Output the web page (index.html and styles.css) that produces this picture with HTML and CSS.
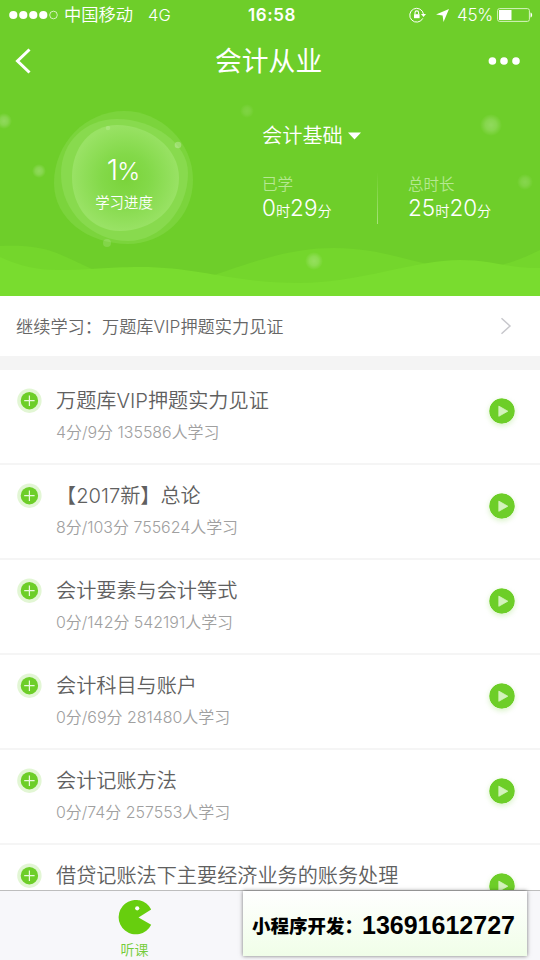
FILE: index.html
```html
<!DOCTYPE html>
<html lang="zh-CN">
<head>
<meta charset="utf-8">
<meta name="viewport" content="width=device-width, initial-scale=1">
<title>会计从业</title>
<link rel="stylesheet" href="styles.css">
</head>
<body>
<svg class="defs" aria-hidden="true">
  <defs>
    <symbol id="plus" viewBox="0 0 26 26">
      <circle cx="13.4" cy="12.7" r="12.2" fill="#e2f6d4"/>
      <circle cx="13.4" cy="12.7" r="8.7" fill="#6dce28"/>
      <path d="M13.4 7.5v10.4M8.2 12.7h10.4" stroke="#e9fadc" stroke-width="1.2" fill="none"/>
    </symbol>
    <symbol id="play" viewBox="0 0 26 26">
      <circle cx="13" cy="13" r="12.8" fill="#6dce28"/>
      <path d="M9.8 8.1v10.2l9-5.1z" fill="#d3f3bc" stroke="#d3f3bc" stroke-width=".8" stroke-linejoin="round"/>
    </symbol>
  </defs>
</svg>
<div class="screen">
  <header class="hero">
    <svg class="scene" viewBox="0 0 540 296" aria-hidden="true">
      <defs>
        <radialGradient id="orb"><stop offset="0" stop-color="#7ad33a"/><stop offset=".45" stop-color="#83d949"/><stop offset="1" stop-color="#99e265"/></radialGradient>
        <radialGradient id="dot"><stop offset="0" stop-color="#fff" stop-opacity=".24"/><stop offset=".5" stop-color="#fff" stop-opacity=".17"/><stop offset="1" stop-color="#fff" stop-opacity="0"/></radialGradient>
      </defs>
      <path d="M0 246C28 245 44 247 66 257C99 272 122 286 160 286C207 286 262 248 334 248C391 248 421 269 468 269C502 269 523 258 540 250V296H0Z" fill="#74d62c"/>
      <path d="M0 257C22 267 38 270 60 270C91 270 105 267 140 267C201 267 231 283 299 283C357 283 417 260 460 260C494 260 510 269 540 268V296H0Z" fill="#79dc2f"/>
      <path d="M124 111C160 111 193 141 193 180C193 218 162 244 128 244C88 244 54 219 54 183C54 143 86 111 124 111Z" fill="#7bd43c"/>
      <path d="M117 119C153 119 188 143 188 173C188 210 160 241 128 241C93 241 61 213 61 174C61 141 86 119 117 119Z" fill="#88da4e"/>
      <path d="M117 125C148 125 179 147 179 178C179 209 151 231 120 231C91 231 72 207 72 177C72 147 91 125 117 125Z" fill="url(#orb)"/>
      <g fill="url(#dot)">
        <circle cx="4" cy="121" r="8"/><circle cx="39" cy="171" r="7"/><circle cx="247" cy="111" r="7" opacity=".5"/>
        <circle cx="491" cy="125" r="11"/><circle cx="525" cy="182" r="8" opacity=".7"/><circle cx="314" cy="261" r="9"/>
      </g>
      <g fill="#fff"><circle cx="178" cy="145" r="3.3" opacity=".25"/><circle cx="108" cy="128" r="2.3" opacity=".15"/><circle cx="107" cy="243" r="4" opacity=".14"/></g>
    </svg>
    <div class="status">
      <svg class="signal" width="50" height="10" viewBox="0 0 50 10" fill="#fff"><circle cx="4.3" cy="5" r="4.1"/><circle cx="14.3" cy="5" r="4.1"/><circle cx="24.3" cy="5" r="4.1"/><circle cx="34.3" cy="5" r="4.1"/><circle cx="44.5" cy="5" r="3.8" fill="none" stroke="#fff" stroke-width=".7"/></svg>
      <span class="carrier">中国移动</span>
      <span class="network">4G</span>
      <span class="clock">16:58</span>
      <svg class="lock" width="18" height="16" viewBox="0 0 18 16" fill="none" stroke="#fff"><path d="M13.8 11.4A6.9 6.9 0 1 1 14.5 7.2" stroke-width="1"/><path d="M12 7h5l-2.5 3z" fill="#fff" stroke="none"/><path d="M5 7.2h5.6v4H5z" fill="#fff" stroke="none"/><path d="M6 7.2V5.7a1.8 1.8 0 0 1 3.6 0v1.5" stroke-width="1.1"/></svg>
      <svg class="locate" width="13" height="13" viewBox="0 0 13 13"><path d="M13 0L7.5 13L6.6 6.4L0 5.5z" fill="#fff"/></svg>
      <span class="percent">45%</span>
      <svg class="battery" width="36" height="14" viewBox="0 0 36 14"><rect x=".6" y=".6" width="31.8" height="12.8" rx="2" fill="none" stroke="#d7f3c1" stroke-width="1"/><path d="M2 2h12.5v10H2z" fill="#fff"/><path d="M33.5 4.5c2.2.4 2.2 4.6 0 5z" fill="#fff"/></svg>
    </div>
    <nav class="navbar">
      <svg class="back" width="18" height="26" viewBox="0 0 18 26"><path d="M16.5 1.5L4.5 13L16.5 24.5" fill="none" stroke="#fff" stroke-width="3"/></svg>
      <h1>会计从业</h1>
      <svg class="more" width="32" height="8" viewBox="0 0 32 8" fill="#fff"><circle cx="4.4" cy="4" r="3.8"/><circle cx="16" cy="4" r="3.8"/><circle cx="28" cy="4" r="3.8"/></svg>
    </nav>
    <div class="summary">
      <div class="progress"><div class="rate"><b>1</b>%</div><div class="rate-label">学习进度</div></div>
      <div class="course">
        <div class="subject">会计基础<svg width="13" height="8" viewBox="0 0 13 8"><path d="M0 .5h13L6.5 7.5z" fill="#fff"/></svg></div>
        <div class="times">
          <div class="time learned"><div class="label">已学</div><div class="value">0<small>时</small>29<small>分</small></div></div>
          <div class="time total"><div class="label">总时长</div><div class="value">25<small>时</small>20<small>分</small></div></div>
        </div>
      </div>
    </div>
  </header>
  <a class="resume"><span>继续学习：万题库<i>VIP</i>押题实力见证</span><svg width="12" height="18" viewBox="0 0 12 18"><path d="M1.5 1.2L10 9L1.5 16.8" fill="none" stroke="#c7c7cc" stroke-width="1.5"/></svg></a>
  <main class="lessons">
    <article class="lesson"><svg class="plus"><use href="#plus"/></svg><div class="info"><h2>万题库<i>VIP</i>押题实力见证</h2><p>4分/9分 135586人学习</p></div><svg class="play"><use href="#play"/></svg></article>
    <article class="lesson"><svg class="plus"><use href="#plus"/></svg><div class="info"><h2>【<i>2017</i>新】总论</h2><p>8分/103分 755624人学习</p></div><svg class="play"><use href="#play"/></svg></article>
    <article class="lesson"><svg class="plus"><use href="#plus"/></svg><div class="info"><h2>会计要素与会计等式</h2><p>0分/142分 542191人学习</p></div><svg class="play"><use href="#play"/></svg></article>
    <article class="lesson"><svg class="plus"><use href="#plus"/></svg><div class="info"><h2>会计科目与账户</h2><p>0分/69分 281480人学习</p></div><svg class="play"><use href="#play"/></svg></article>
    <article class="lesson"><svg class="plus"><use href="#plus"/></svg><div class="info"><h2>会计记账方法</h2><p>0分/74分 257553人学习</p></div><svg class="play"><use href="#play"/></svg></article>
    <article class="lesson"><svg class="plus"><use href="#plus"/></svg><div class="info"><h2>借贷记账法下主要经济业务的账务处理</h2></div><svg class="play"><use href="#play"/></svg></article>
  </main>
  <footer class="tabs">
    <div class="tab"><svg width="34" height="35" viewBox="0 0 34 35"><path d="M33.2 9.5A17.2 17.2 0 1 0 33.2 24.8L20.5 17.4Z" fill="#67ce0e"/><circle cx="19.2" cy="8.3" r="2.1" fill="#fff"/></svg><span>听课</span></div>
  </footer>
  <aside class="contact"><span>小程序开发：</span><strong>13691612727</strong></aside>
</div>
</body>
</html>
```
FILE: styles.css
```css
* { box-sizing: border-box; margin: 0; padding: 0; }
body { width: 540px; height: 960px; overflow: hidden; background: #fff; font-family: Inter, "Noto Sans CJK SC", sans-serif; font-weight: 350; }
i { font-style: normal; }
svg { display: block; flex: none; }
.defs { position: absolute; width: 0; height: 0; }
.screen { position: relative; width: 540px; height: 960px; display: flex; flex-direction: column; overflow: hidden; }

.hero { position: relative; height: 296px; flex: none; background: #6ece2a; color: #fff; isolation: isolate; }
.scene { position: absolute; inset: 0; width: 540px; height: 296px; z-index: -1; }
.status { height: 30px; padding: 0 8px 0 9px; display: flex; align-items: center; font-size: 16.5px; line-height: 30px; white-space: nowrap; }
.carrier { width: 84px; padding-left: 5px; font-size: 17.3px; }
.network { width: 105px; padding-left: 5px; }
.clock { width: 161px; font-weight: 600; font-size: 17px; letter-spacing: .6px; }
.lock { margin-right: 9px; }
.locate { margin-right: 8px; }
.percent { width: 40px; font-size: 17px; letter-spacing: -.3px; }
.battery { margin-right: -1px; }
.navbar { height: 60px; padding: 1px 20px 0 13px; display: flex; align-items: center; }
.navbar h1 { margin: 1px auto 0 184px; font-size: 26.8px; font-weight: 400; line-height: 60px; }
.summary { display: flex; }
.progress { width: 262px; padding: 62px 14px 0 0; text-align: center; }
.rate { height: 36px; font-size: 24.5px; line-height: 36px; letter-spacing: -1px; font-weight: 300; padding-right: 2px; }
.rate b { font-size: 29px; font-weight: 300; }
.rate-label { margin-top: 5px; font-size: 14.4px; line-height: 20px; }
.course { padding-top: 31px; }
.subject { display: flex; align-items: center; gap: 5px; height: 30px; font-size: 20.2px; line-height: 30px; }
.times { display: flex; margin-top: 22px; }
.time { height: 51px; }
.learned { width: 116px; border-right: 1px solid; border-image: linear-gradient(transparent, #a9e37e) 1; }
.total { padding-left: 30px; }
.label { font-size: 15.5px; line-height: 24px; color: #b6e892; }
.value { height: 24px; font-size: 22.5px; line-height: 22px; font-weight: 300; white-space: nowrap; }
.value small { font-size: 14.2px; font-weight: 350; }

.resume { height: 74px; flex: none; padding: 0 28px 0 16px; display: flex; align-items: center; justify-content: space-between; border-bottom: 14px solid #f4f4f4; font-size: 17.2px; color: #666; }
.resume span { margin-top: -2px; }

.lessons { height: 520px; flex: none; overflow: hidden; }
.lesson { height: 95px; padding: 0 25px 0 16px; display: flex; border-bottom: 2px solid #f5f5f5; }
.plus { width: 26px; height: 26px; margin-top: 18px; }
.info { flex: 1; padding: 16px 0 0 14px; white-space: nowrap; }
.info h2 { height: 30px; font-size: 20.15px; line-height: 30px; font-weight: 350; color: #606060; }
.info p { margin-top: 5px; font-size: 15.95px; line-height: 24px; color: #a0a0a0; }
.play { width: 26px; height: 26px; margin-top: 28px; border-radius: 50%; box-shadow: 0 2px 5px #6dce2840; }

.tabs { height: 70px; flex: none; background: #f7f7fa; border-top: 1px solid #bdbdbd; }
.tab { width: 269px; padding-top: 9px; display: flex; flex-direction: column; align-items: center; }
.tab span { margin-top: 4px; font-size: 14px; line-height: 22px; color: #74cc38; }
.contact { position: absolute; left: 243px; top: 891px; width: 284px; height: 65px; padding: 3px 0 0 9px; display: flex; align-items: center; background: linear-gradient(#fff, #f0fee8); box-shadow: 0 0 4px #0008; color: #000; white-space: nowrap; }
.contact span { width: 110px; font-size: 18.5px; font-weight: 900; }
.contact strong { font: 700 25px "Liberation Sans", sans-serif; }
```
